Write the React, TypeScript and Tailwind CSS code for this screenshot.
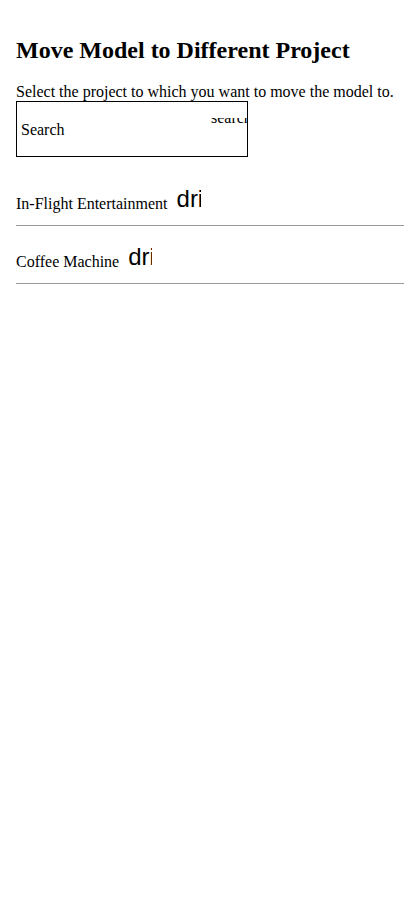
const serif = "font-['Liberation_Serif','Times_New_Roman',serif]";

const projects = ["In-Flight Entertainment", "Coffee Machine"];

function ClippedIcon({ name }: { name: string }) {
  // icon font missing: ligature name shows as text, cut to a 24px square
  return (
    <span className="relative top-[2px] ml-[5px] inline-block h-6 w-6 overflow-hidden whitespace-nowrap align-baseline font-['Liberation_Sans',Arial,sans-serif] text-[24px] leading-none">
      {name}
    </span>
  );
}

export default function App() {
  return (
    <div className={`${serif} min-h-[920px] bg-white px-4 pt-[36px] text-black`}>
      <h1 className="text-[24px] font-bold leading-[28px]">Move Model to Different Project</h1>
      <p className="mt-[19px] text-base leading-[18px]">
        Select the project to which you want to move the model to.
      </p>

      <div className="relative flex h-[56px] w-[232px] items-center overflow-hidden border border-black pl-1 pt-[2px]">
        <span className="text-base leading-[18px]">Search</span>
        <span className="absolute left-[194px] top-[16px] h-[7px] overflow-hidden whitespace-nowrap">
          <span className="-mt-[9px] block text-base leading-[18px]">search</span>
        </span>
      </div>

      <div className="mt-[28px]">
        {projects.map((p, i) => (
          <div key={p} className={i > 0 ? "pt-[17px]" : ""}>
            <div className="text-base leading-[18px]">
              {p} <ClippedIcon name="drive_file_move" />
            </div>
            <div className="mt-[12px] h-px bg-[#9a9a9a]" />
          </div>
        ))}
      </div>
    </div>
  );
}
